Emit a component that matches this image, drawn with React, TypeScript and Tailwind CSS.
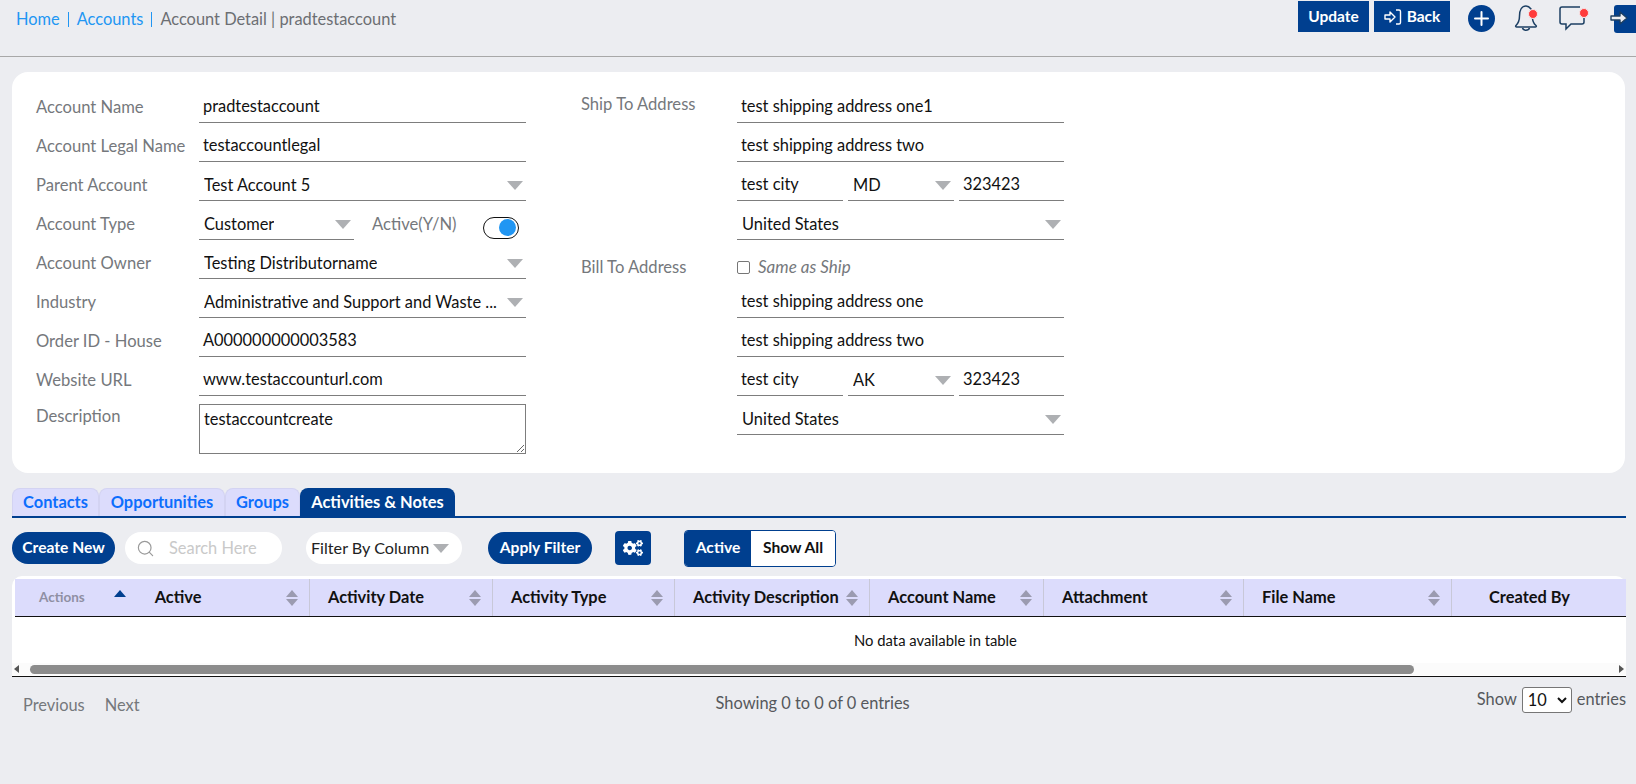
import { FaCogs } from 'react-icons/fa';
import { Search } from 'lucide-react';

const font = { fontFamily: 'Lato, "Open Sans", sans-serif' };

function Caret({ className = '' }: { className?: string }) {
  return <span className={`inline-block h-0 w-0 border-x-[8px] border-t-[9px] border-x-transparent border-t-[#aeb0b3] ${className}`} />;
}

function Label({ text, className = '' }: { text: string; className?: string }) {
  return <span className={`text-[16.6px] text-[#75787c] ${className}`}>{text}</span>;
}

function TextValue({ value, className = 'flex-1' }: { value: string; className?: string }) {
  return (
    <div className={`flex h-full items-center border-b border-[#7d7d7d] pl-[4px] pt-[7px] text-[16.4px] text-[#111] ${className}`}>
      {value}
    </div>
  );
}

function SelectValue({ value, className = 'flex-1' }: { value: string; className?: string }) {
  return (
    <div className={`flex h-full items-center justify-between border-b border-[#7d7d7d] pl-[5px] pr-[3px] pt-[9px] text-[16.4px] text-[#111] ${className}`}>
      <span className="truncate">{value}</span>
      <Caret className="ml-1 shrink-0" />
    </div>
  );
}

function Row({ label, children }: { label: string; children: React.ReactNode }) {
  return (
    <div className="flex h-[39px] items-center">
      <Label text={label} className="w-[163px] shrink-0 pt-[8px]" />
      {children}
    </div>
  );
}

function AddressBlock({ city, state }: { city: string; state: string }) {
  return (
    <>
      <div className="flex h-[39px] gap-[5px]">
        <TextValue value={city} className="w-[106px]" />
        <SelectValue value={state} className="w-[106px]" />
        <TextValue value="323423" className="w-[105px]" />
      </div>
      <div className="flex h-[39px]">
        <SelectValue value="United States" />
      </div>
    </>
  );
}

function SortIcon() {
  return (
    <span className="flex flex-col items-center gap-[2px]">
      <span className="h-0 w-0 border-x-[6px] border-b-[7px] border-x-transparent border-b-[#9b9bb0]" />
      <span className="h-0 w-0 border-x-[6px] border-t-[7px] border-x-transparent border-t-[#9b9bb0]" />
    </span>
  );
}

const columns = [
  { name: 'Activity Date', width: 'w-[183px]' },
  { name: 'Activity Type', width: 'w-[182px]' },
  { name: 'Activity Description', width: 'w-[195px]' },
  { name: 'Account Name', width: 'w-[174px]' },
  { name: 'Attachment', width: 'w-[200px]' },
  { name: 'File Name', width: 'w-[208px]' },
];

export default function App() {
  return (
    <div style={font} className="h-[784px] w-[1636px] overflow-hidden bg-[#ecedf1]">
      {/* Header */}
      <div className="flex h-[57px] items-start justify-between border-b border-[#a8a8a8]">
        <div className="flex items-center pl-4 pt-[7px] text-[16.4px] text-[#2196f3]">
          <span>Home</span>
          <span className="mx-[8px] h-[15px] w-px bg-[#2196f3]" />
          <span>Accounts</span>
          <span className="mx-[8px] h-[15px] w-px bg-[#2196f3]" />
          <span className="text-[#6c6f73]">Account Detail | pradtestaccount</span>
        </div>
        <div className="flex items-start pt-px">
          <button className="h-[31px] w-[71px] bg-[#003f8f] text-[15.5px] font-bold text-white">Update</button>
          <button className="ml-[5px] flex h-[31px] w-[76px] items-center justify-center gap-[5px] bg-[#003f8f] text-[15.5px] font-bold text-white">
            <svg width="18" height="16" viewBox="0 0 18 16" fill="none" stroke="white" strokeWidth="1.4">
              <path d="M1 6h5V3l5 5-5 5v-3H1z" strokeLinejoin="round" />
              <path d="M12 1h3a1.500 1.500 0 0 1 1.500 1.500v11A1.500 1.500 0 0 1 15 15h-3" />
            </svg>
            Back
          </button>
          <span className="ml-[18px] mt-[4px] flex h-[27px] w-[27px] items-center justify-center rounded-full bg-[#003f8f]">
            <svg width="15" height="15" viewBox="0 0 15 15" stroke="white" strokeWidth="2" strokeLinecap="round">
              <path d="M7.500 1v13M1 7.500h13" />
            </svg>
          </span>
          <svg className="ml-[18px] mt-[3px] overflow-visible" width="26" height="30" viewBox="0 0 26 30" fill="none">
            <path d="M18 5C16.500 3 15 2 13 2 9 2 6.500 6 6.500 12c0 5-1.500 7.500-3.500 9.500-.700.700-.300 1.500.700 1.500h18.600c1 0 1.400-1 .700-1.500-2.500-2-3.500-5-3.500-8" stroke="#1c3f63" strokeWidth="1.500" strokeLinecap="round" />
            <path d="M9.500 24c1 3 6 3 7 0" stroke="#1c3f63" strokeWidth="1.500" />
            <circle cx="20" cy="10" r="4.500" fill="#ff3b3b" stroke="#f6e3e5" strokeWidth="1" />
          </svg>
          <svg className="ml-[19px] mt-[3px] overflow-visible" width="32" height="30" viewBox="0 4 32 30" fill="none">
            <path d="M26 18v4c0 1-1 2-2 2H13l-5 5v-5H4c-1 0-2-1-2-2V9c0-1 1-2 2-2h18" stroke="#1c3f63" strokeWidth="1.500" />
            <circle cx="26" cy="13" r="4.500" fill="#ff3b3b" stroke="#f6e3e5" strokeWidth="1" />
          </svg>
          <svg className="ml-[18px] mt-[4px]" width="28" height="28" viewBox="0 0 28 28" fill="none">
            <rect x="6" y="0" width="30" height="28" rx="3" fill="#003f8f" />
            <path d="M3 11h9V7l7 6-7 6v-4H3z" fill="#ecedf1" stroke="#1c3f63" strokeWidth="1.400" strokeLinejoin="round" />
          </svg>
        </div>
      </div>

      {/* Form card */}
      <div className="ml-3 mr-[11px] mt-[15px] flex h-[401px] rounded-[16px] bg-white pl-6 pt-3">
        <div className="w-[490px]">
          <Row label="Account Name"><TextValue value="pradtestaccount" /></Row>
          <Row label="Account Legal Name"><TextValue value="testaccountlegal" /></Row>
          <Row label="Parent Account"><SelectValue value="Test Account 5" /></Row>
          <Row label="Account Type">
            <SelectValue value="Customer" className="w-[155px]" />
            <Label text="Active(Y/N)" className="ml-[18px] pt-[8px]" />
            <span className="ml-[26px] mt-[14px] flex h-[22px] w-[36px] items-center justify-end rounded-full border-[1.5px] border-[#111] bg-white pr-[2px]">
              <span className="h-[17px] w-[17px] rounded-full bg-[#2196f3]" />
            </span>
          </Row>
          <Row label="Account Owner"><SelectValue value="Testing Distributorname" /></Row>
          <Row label="Industry"><SelectValue value="Administrative and Support and Waste ..." /></Row>
          <Row label="Order ID - House"><TextValue value="A000000000003583" /></Row>
          <Row label="Website URL"><TextValue value="www.testaccounturl.com" /></Row>
          <div className="mt-2 flex">
            <Label text="Description" className="w-[163px] shrink-0" />
            <textarea
              readOnly
              value="testaccountcreate"
              className="h-[50px] w-[327px] border border-[#7d7d7d] px-[4px] py-[2px] text-[16.4px] text-[#111] outline-none"
            />
          </div>
        </div>

        <div className="ml-[55px] w-[482px]">
          <div className="flex">
            <Label text="Ship To Address" className="mt-[8px] w-[156px] shrink-0" />
            <div className="flex-1">
              <div className="flex h-[39px]"><TextValue value="test shipping address one1" /></div>
              <div className="flex h-[39px]"><TextValue value="test shipping address two" /></div>
              <AddressBlock city="test city" state="MD" />
            </div>
          </div>
          <div className="flex">
            <Label text="Bill To Address" className="mt-[15px] w-[156px] shrink-0" />
            <div className="flex-1">
              <div className="flex h-[39px] items-center pt-[15px]">
                <span className="h-[13px] w-[13px] rounded-[2px] border border-[#767676] bg-white" />
                <span className="ml-[8px] text-[17px] italic text-[#75787c]">Same as Ship</span>
              </div>
              <div className="flex h-[39px]"><TextValue value="test shipping address one" /></div>
              <div className="flex h-[39px]"><TextValue value="test shipping address two" /></div>
              <AddressBlock city="test city" state="AK" />
            </div>
          </div>
        </div>
      </div>

      {/* Tabs */}
      <div className="ml-3 mr-[10px] mt-[15px] flex h-[30px] items-end border-b-2 border-[#003f8f] text-[16.4px] font-bold">
        <span className="flex h-[28px] w-[87px] items-center justify-center rounded-t-[8px] border border-b-0 border-[#d3d3f2] bg-[#dcdcfc] text-[#0d6efd]">Contacts</span>
        <span className="flex h-[28px] w-[126px] items-center justify-center rounded-t-[8px] border border-b-0 border-[#d3d3f2] bg-[#dcdcfc] text-[#0d6efd]">Opportunities</span>
        <span className="flex h-[28px] w-[75px] items-center justify-center rounded-t-[8px] border border-b-0 border-[#d3d3f2] bg-[#dcdcfc] text-[#0d6efd]">Groups</span>
        <span className="flex h-[28px] w-[155px] items-center justify-center rounded-t-[8px] bg-[#003f8f] text-white">Activities &amp; Notes</span>
      </div>

      {/* Toolbar */}
      <div className="ml-3 mt-[11px] flex h-[38px] items-center text-[15.6px]">
        <button className="mb-px h-[32px] w-[103px] rounded-full bg-[#003f8f] font-bold text-white">Create New</button>
        <div className="ml-[10px] flex h-[32px] w-[157px] items-center rounded-full bg-white pl-[11px]">
          <Search size={19} strokeWidth={1.5} className="text-[#9a9a9a]" />
          <span className="ml-[14px] text-[16.4px] text-[#c9c9c9]">Search Here</span>
        </div>
        <div className="ml-[24px] flex h-[32px] w-[156px] items-center rounded-full bg-white pl-[5px] text-[16.2px] text-[#222]">
          Filter By Column
          <Caret className="ml-[4px]" />
        </div>
        <button className="ml-[26px] mb-px h-[32px] w-[104px] rounded-full bg-[#003f8f] font-bold text-white">Apply Filter</button>
        <span className="ml-[23px] flex h-[34px] w-[36px] items-center justify-center rounded-[4px] bg-[#003f8f] text-white">
          <FaCogs size={20} />
        </span>
        <div className="ml-[33px] flex h-[37px] w-[152px] overflow-hidden rounded-[4px] border border-[#003f8f] font-bold">
          <span className="flex w-[66px] items-center justify-center bg-[#003f8f] text-white">Active</span>
          <span className="flex flex-1 items-center justify-center bg-white text-[#111]">Show All</span>
        </div>
      </div>

      {/* Table */}
      <div className="ml-3 mr-[10px] mt-[9px] h-[101px] rounded-t-[10px] border-b border-[#111] bg-white">
        <div className="relative h-[100px] overflow-hidden pt-[3px]">
          <div className="ml-[3px] flex h-[38px] items-center border-b border-[#111] bg-[#dcdcfc] text-[16.4px] font-bold text-[#111]">
            <div className="relative flex h-full w-[295px] shrink-0 items-center border-r border-[#c8c8d8]">
              <span className="ml-6 text-[13.5px] text-[#8f8fa3]">Actions</span>
              <span className="ml-[29px] mb-2 h-0 w-0 border-x-[6px] border-b-[7px] border-x-transparent border-b-[#003f8f]" />
              <span className="ml-[29px]">Active</span>
              <span className="absolute right-[11px]"><SortIcon /></span>
            </div>
            {columns.map((c) => (
              <div key={c.name} className={`relative flex h-full shrink-0 items-center border-r border-[#c8c8d8] pl-[18px] ${c.width}`}>
                {c.name}
                <span className="absolute right-[11px]"><SortIcon /></span>
              </div>
            ))}
            <div className="whitespace-nowrap pl-[37px]">Created By</div>
          </div>
          <div className="flex h-[46px] items-center justify-center pl-[233px] text-[14.8px] text-[#111]">No data available in table</div>
          <div className="flex h-[12px] items-center bg-[#fbfbfb] px-[2px]">
            <span className="h-0 w-0 border-y-[4px] border-r-[5px] border-y-transparent border-r-[#555]" />
            <span className="ml-[11px] h-[9px] w-[1384px] rounded-full bg-[#8c8c8c]" />
            <span className="ml-auto h-0 w-0 border-y-[4px] border-l-[5px] border-y-transparent border-l-[#555]" />
          </div>
        </div>
      </div>

      {/* Footer */}
      <div className="ml-[23px] mr-[10px] mt-[10px] flex items-start text-[16.4px]">
        <span className="mt-[6px] text-[#75787c]">Previous</span>
        <span className="ml-[20px] mt-[6px] text-[#75787c]">Next</span>
        <span className="ml-[576px] mt-[4px] text-[#55585c]">Showing 0 to 0 of 0 entries</span>
        <span className="ml-auto text-[#55585c]">Show</span>
        <span className="mx-[5px] flex h-[26px] w-[50px] items-center justify-between rounded-[3px] border border-[#767676] bg-white pl-[5px] pr-[4px] text-[#111]">
          10
          <svg width="10" height="7" viewBox="0 0 10 7" fill="none" stroke="#111" strokeWidth="2"><path d="M1 1l4 4 4-4" /></svg>
        </span>
        <span className="text-[#55585c]">entries</span>
      </div>
    </div>
  );
}
